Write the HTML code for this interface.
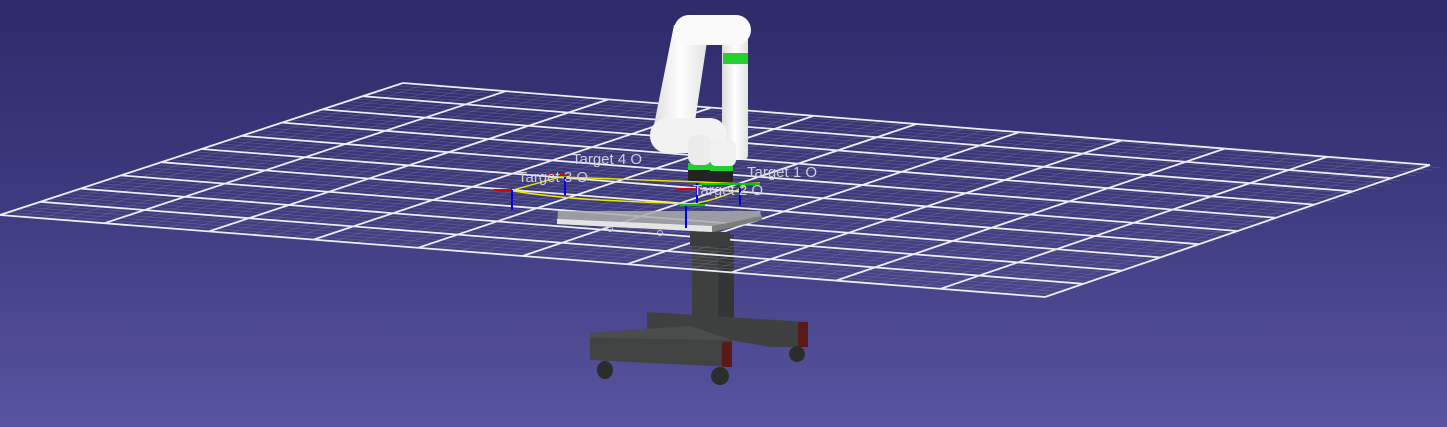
<!DOCTYPE html>
<html><head><meta charset="utf-8"><style>
html,body{margin:0;padding:0;}
body{width:1447px;height:427px;overflow:hidden;background:linear-gradient(#2d2b69,#3c3a7e 45%,#5854a0);}
svg{position:absolute;left:0;top:0;}
text{font-family:"Liberation Sans",sans-serif;font-size:15px;fill:#cfcfe0;}
</style></head><body>
<svg width="1447" height="427" viewBox="0 0 1447 427">
<defs>
<linearGradient id="wh" x1="0" x2="1" y1="0" y2="0"><stop offset="0" stop-color="#dcdcdc"/><stop offset="0.5" stop-color="#ffffff"/><stop offset="1" stop-color="#e2e2e2"/></linearGradient>
</defs>
<!-- stand -->
<g>
<rect x="692" y="235" width="42" height="95" fill="#3d403f"/>
<rect x="718" y="235" width="16" height="95" fill="#333635"/>
<polygon points="647,312 808,322 808,347 770,347 730,340 647,336" fill="#3e4140"/>
<rect x="798" y="322" width="10" height="25" fill="#5a1a1a"/>
<polygon points="590,333 690,326 732,340 732,367 590,360" fill="#404342"/>
<polygon points="590,333 690,326 732,340 590,338" fill="#4a4d4c"/>
<rect x="722" y="342" width="10" height="25" fill="#5a1a1a"/>
<ellipse cx="605" cy="370" rx="8" ry="9" fill="#2b2d2d"/>
<ellipse cx="720" cy="376" rx="9" ry="9" fill="#2b2d2d"/>
<ellipse cx="797" cy="354" rx="8" ry="8" fill="#2b2d2d"/>
</g>
<!-- minor grid -->
<g transform="matrix(20.9,1.64,8.06,-2.64,0,215)" stroke="#8a8a96" stroke-opacity="0.45" fill="none">
<path vector-effect="non-scaling-stroke" stroke-width="0.6" d="M0 1H50M0 2H50M0 3H50M0 4H50M0 6H50M0 7H50M0 8H50M0 9H50M0 11H50M0 12H50M0 13H50M0 14H50M0 16H50M0 17H50M0 18H50M0 19H50M0 21H50M0 22H50M0 23H50M0 24H50M0 26H50M0 27H50M0 28H50M0 29H50M0 31H50M0 32H50M0 33H50M0 34H50M0 36H50M0 37H50M0 38H50M0 39H50M0 41H50M0 42H50M0 43H50M0 44H50M0 46H50M0 47H50M0 48H50M0 49H50"/>
<path vector-effect="non-scaling-stroke" stroke-width="0.6" d="M1 0V50M2 0V50M3 0V50M4 0V50M6 0V50M7 0V50M8 0V50M9 0V50M11 0V50M12 0V50M13 0V50M14 0V50M16 0V50M17 0V50M18 0V50M19 0V50M21 0V50M22 0V50M23 0V50M24 0V50M26 0V50M27 0V50M28 0V50M29 0V50M31 0V50M32 0V50M33 0V50M34 0V50M36 0V50M37 0V50M38 0V50M39 0V50M41 0V50M42 0V50M43 0V50M44 0V50M46 0V50M47 0V50M48 0V50M49 0V50"/>
</g>
<!-- major grid -->
<g stroke="#ececf2" stroke-width="1.8" fill="none">
<path d="M0 215L1045 297M40.3 201.8L1083.5 283.8M80.6 188.6L1122 270.6M120.9 175.4L1160.5 257.4M161.2 162.2L1199 244.2M201.5 149L1237.5 231M241.8 135.8L1276 217.8M282.1 122.6L1314.5 204.6M322.4 109.4L1353 191.4M362.7 96.2L1391.5 178.2M403 83L1430 165"/>
<path d="M0 215L403 83M104.5 223.2L505.7 91.2M209 231.4L608.4 99.4M313.5 239.6L711.1 107.6M418 247.8L813.8 115.8M522.5 256L916.5 124M627 264.2L1019.2 132.2M731.5 272.4L1121.9 140.4M836 280.6L1224.6 148.6M940.5 288.8L1327.3 156.8M1045 297L1430 165"/>
</g>
<!-- table plate -->
<polygon points="558,211 760,211 762,220 712,232 557,224" fill="#a9abaa" fill-opacity="0.85"/>
<polygon points="557,219 712,226 712,232 557,224" fill="#e4e4e4"/>
<polygon points="712,226 762,216 762,220 712,232" fill="#7c7e7d"/>
<circle cx="610" cy="229" r="2.5" fill="none" stroke="#ccc"/>
<circle cx="660" cy="233" r="2.5" fill="none" stroke="#ccc"/>
<rect x="690" y="232" width="40" height="14" fill="#3a3d3c"/>
<!-- robot -->
<g>
<rect x="688" y="165" width="45" height="18" rx="3" fill="#232323"/>
<rect x="688" y="163" width="22" height="7" fill="#1fd12f"/>
<rect x="710" y="163" width="23" height="8" fill="#1fd12f"/>
<polygon points="674,25 708,35 694,128 652,135" fill="url(#wh)"/>
<rect x="722" y="35" width="26" height="125" rx="5" fill="url(#wh)"/>
<rect x="723" y="53" width="25" height="11" fill="#22d031"/>
<rect x="674" y="15" width="77" height="30" rx="15" fill="#fafafa"/>
<rect x="650" y="118" width="77" height="35" rx="17" fill="#f2f2f2"/>
<rect x="688" y="135" width="24" height="30" rx="8" fill="#ececec"/>
<rect x="710" y="140" width="26" height="26" rx="6" fill="#f0f0f0"/>
</g>
<!-- paths -->
<g fill="none" stroke="#f0e600" stroke-width="1.4">
<path d="M513 190L560 177L700 182L745 184L760 183"/>
<path d="M513 191Q560 198 600 200T690 204Q720 200 745 186"/>
</g>
<g stroke-width="2">
<path d="M493 190H512" stroke="#e00000"/>
<path d="M512 190V210" stroke="#0000ee"/>
<path d="M548 175H565" stroke="#e00000"/>
<path d="M565 177V195" stroke="#0000ee"/>
<path d="M675 189H700" stroke="#e00000"/>
<path d="M700 184H760" stroke="#10c010"/>
<path d="M740 187V205" stroke="#0000ee"/>
<path d="M686 205V228" stroke="#0000ee"/>
<path d="M680 205H705" stroke="#10c010"/>
<path d="M697 183V203" stroke="#0000ee"/>
</g>
<text x="572" y="164">Target 4 O</text>
<text x="518" y="182">Target 3 O</text>
<text x="747" y="177">Target 1 O</text>
<text x="693" y="195">Target 2 O</text>
</svg>
</body></html>
